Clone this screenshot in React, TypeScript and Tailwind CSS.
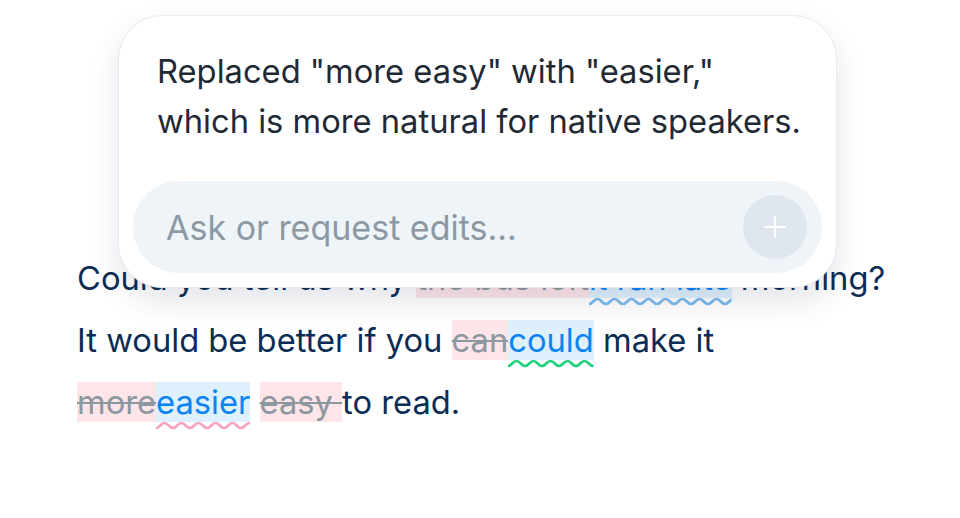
import { useId, type ReactNode } from "react";

function Wave({ color, children }: { color: string; children: ReactNode }) {
  const id = useId();
  return (
    <span className="relative">
      {children}
      <svg className="pointer-events-none absolute left-0 top-full mt-[-1px] h-[10px] w-full" aria-hidden>
        <defs>
          <pattern id={id} width="17" height="10" patternUnits="userSpaceOnUse">
            <path d="M0 7 C4 7 4.5 2 8.5 2 S13 7 17 7" fill="none" stroke={color} strokeWidth="2.7" />
          </pattern>
        </defs>
        <rect width="100%" height="10" fill={`url(#${id})`} />
      </svg>
    </span>
  );
}

function Del({ children }: { children: ReactNode }) {
  return <span className="bg-[#fde5ea] text-[#8d979f] line-through decoration-[#8d979f] decoration-2">{children}</span>;
}

function Ins({ children }: { children: ReactNode }) {
  return <span className="bg-[#dff0fd] text-[#0a84f2]">{children}</span>;
}

export default function App() {
  return (
    <div className="relative h-[518px] w-[960px] overflow-hidden bg-white font-['Inter','Noto_Sans',sans-serif]">
      {/* editor text */}
      <div className="whitespace-nowrap pl-[77px] pt-[247px] text-[32.7px] leading-[62px] text-[#0b2d55]">
        Could you tell us why <Del>the bus left</Del>
        <Wave color="#7ab9ee">
          <Ins>it ran late</Ins>
        </Wave>{" "}
        morning?
        <br />
        It would be better if you <Del>can</Del>
        <Wave color="#22d27a">
          <Ins>could</Ins>
        </Wave>{" "}
        make it
        <br />
        <Del>more</Del>
        <Wave color="#f7a3c3">
          <Ins>easier</Ins>
        </Wave>{" "}
        <Del>easy </Del>to read.
      </div>

      {/* assistant popover */}
      <div className="absolute left-[118px] top-[15px] flex h-[273px] w-[719px] flex-col rounded-[44px] border border-[#e6eaf0] bg-white p-[14px] shadow-[0_14px_30px_rgba(30,45,70,0.12)]">
        <p className="whitespace-nowrap pl-[24px] pt-[16px] text-[32.7px] leading-[50px] text-[#1f2a35]">
          Replaced "more easy" with "easier,"
          <br />
          which is more natural for native speakers.
        </p>
        <div className="mt-auto flex h-[92px] items-center rounded-full bg-[#eff4f8] pl-[33px] pr-[15px]">
          <input
            className="min-w-0 flex-1 bg-transparent text-[34px] text-[#1f2a35] outline-none placeholder:text-[#8c99a5]"
            placeholder="Ask or request edits..."
          />
          <button className="flex h-[64px] w-[64px] shrink-0 items-center justify-center rounded-full bg-[#dfe6ee]">
            <svg width="24" height="24" viewBox="0 0 24 24" fill="none" stroke="white" strokeWidth="2.2" strokeLinecap="round">
              <path d="M12 2v20M2 12h20" />
            </svg>
          </button>
        </div>
      </div>
    </div>
  );
}
